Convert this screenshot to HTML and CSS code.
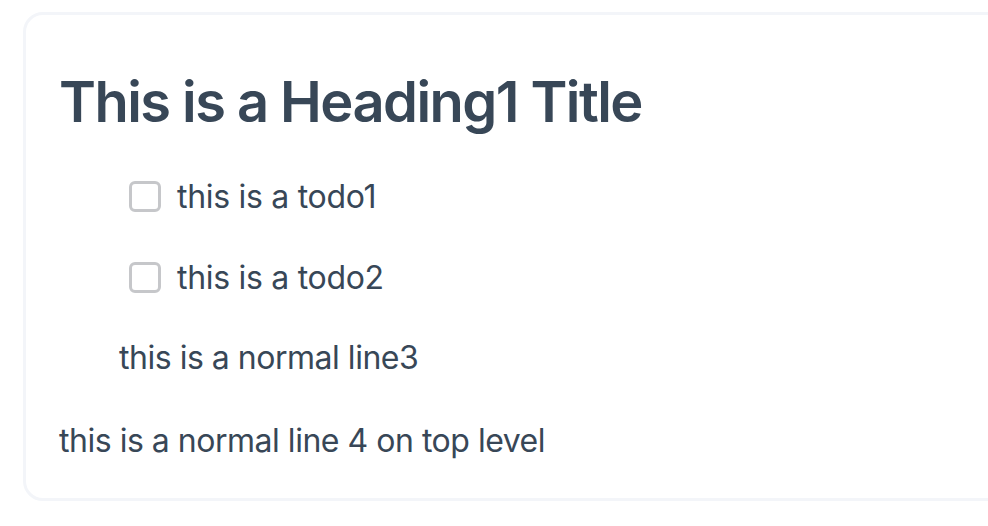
FILE: index.html
```html
<!DOCTYPE html>
<html>
<head>
<meta charset="utf-8">
<link rel="stylesheet" href="styles.css">
</head>
<body>
<div class="card">
  <h1 class="title">This is a Heading1 Title</h1>
  <div class="block nested">
    <div class="todo"><span class="checkbox"></span><span class="text">this is a todo1</span></div>
    <div class="todo"><span class="checkbox"></span><span class="text">this is a todo2</span></div>
    <div class="line line3">this is a normal line3</div>
  </div>
  <div class="line line4">this is a normal line 4 on top level</div>
</div>
</body>
</html>
```
FILE: styles.css
```css
html, body {
  margin: 0;
  padding: 0;
  background: #ffffff;
  overflow: hidden;
}
body {
  font-family: Inter, "Noto Sans", sans-serif;
  color: #384757;
  padding: 12px 0 0 23px;
}
.card {
  width: 1000px;
  border: 3px solid #f3f5f9;
  border-radius: 20px;
  padding: 54px 0 33px 33px;
}
.title {
  margin: 0;
  font-size: 56px;
  line-height: 67px;
  font-weight: 600;
  letter-spacing: -1.55px;
}
.nested {
  padding-left: 60px;
}
.todo {
  display: flex;
  align-items: center;
  height: 48px;
  margin-left: 10px;
  font-size: 32px;
  line-height: 48px;
  letter-spacing: -0.3px;
}
.todo:first-child {
  margin-top: 37px;
}
.todo + .todo {
  margin-top: 33px;
}
.checkbox {
  box-sizing: border-box;
  width: 32px;
  height: 31px;
  border: 3px solid #c6c7ca;
  border-radius: 6px;
  margin-right: 16px;
  margin-top: -2px;
}
.line {
  font-size: 32px;
  line-height: 48px;
  letter-spacing: -0.48px;
}
.line3 {
  margin-top: 32px;
}
.line4 {
  margin-top: 35px;
}
```
